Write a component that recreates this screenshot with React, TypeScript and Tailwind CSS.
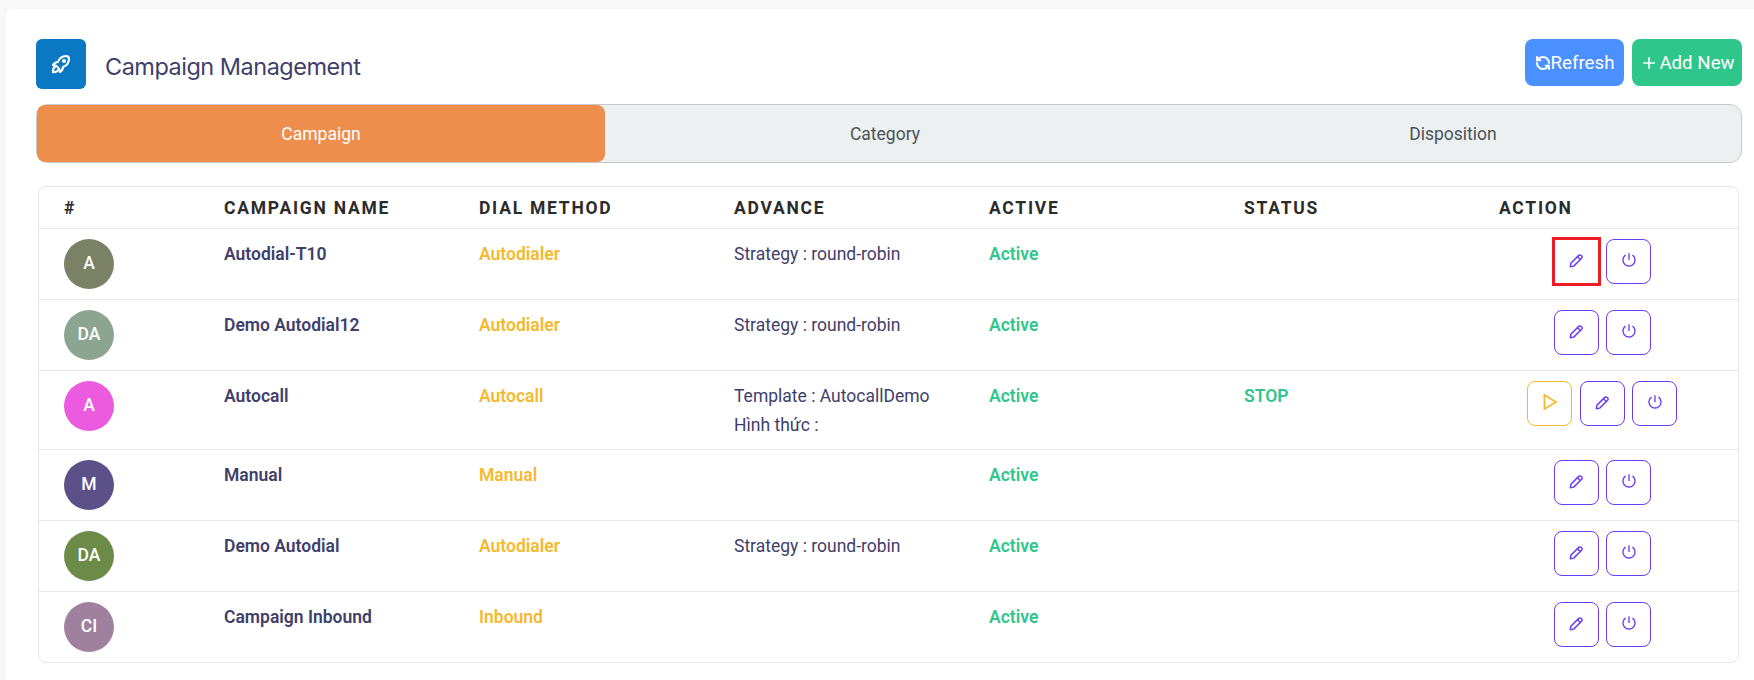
import React from 'react';
import { RefreshCcw } from 'lucide-react';
import { RiAddLine, RiShutDownLine } from 'react-icons/ri';
import { TbRocket } from 'react-icons/tb';

const ROWS = [
  { initials: 'A', color: 'bg-[#7a8164]', name: 'Autodial-T10', method: 'Autodialer', advance: ['Strategy : round-robin'], status: '', play: false, marked: true },
  { initials: 'DA', color: 'bg-[#8ca593]', name: 'Demo Autodial12', method: 'Autodialer', advance: ['Strategy : round-robin'], status: '', play: false, marked: false },
  { initials: 'A', color: 'bg-[#ec5bdf]', name: 'Autocall', method: 'Autocall', advance: ['Template : AutocallDemo', 'Hình thức :'], status: 'STOP', play: true, marked: false },
  { initials: 'M', color: 'bg-[#5c5088]', name: 'Manual', method: 'Manual', advance: [], status: '', play: false, marked: false },
  { initials: 'DA', color: 'bg-[#6c8b49]', name: 'Demo Autodial', method: 'Autodialer', advance: ['Strategy : round-robin'], status: '', play: false, marked: false },
  { initials: 'CI', color: 'bg-[#a0809f]', name: 'Campaign Inbound', method: 'Inbound', advance: [], status: '', play: false, marked: false },
];

const HEADERS = ['#', 'Campaign Name', 'Dial Method', 'Advance', 'Active', 'Status', 'Action'];

const iconBtn = 'w-[45px] h-[45px] rounded-lg border flex items-center justify-center bg-white';

// capsule pencil, the icon sets don't have this one
const PencilIcon = () => (
  <svg viewBox="0 0 16 16" className="w-[17px] h-[17px] -mt-0.5 text-[#6a3cf5]" fill="none" stroke="currentColor" strokeWidth="1.4" strokeLinejoin="round" strokeLinecap="round">
    <path d="M2.2 13.8l.5-3.2 7.4-7.4a1.6 1.6 0 0 1 2.3 0l.4.4a1.6 1.6 0 0 1 0 2.3l-7.4 7.4z" />
    <path d="M9 4.4l2.6 2.6" />
  </svg>
);

const PlayIcon = () => (
  <svg viewBox="0 0 16 18" className="w-4 h-[18px] -mt-0.5 text-[#f3ba2f]" fill="none" stroke="currentColor" strokeWidth="1.8" strokeLinejoin="miter">
    <path d="M2.5 2v14l11.5-7z" />
  </svg>
);

const App: React.FC = () => {
  return (
    <div className="h-[680px] overflow-hidden bg-[#f8f8f8] pl-1.5 pt-[9px] font-['Roboto',sans-serif]">
      <div className="h-[671px] bg-white rounded-tl-lg pl-[30px] pr-3 pt-[30px]">

        {/* Header */}
        <div className="flex justify-between items-start h-[50px]">
          <div className="flex items-center">
            <div className="w-[50px] h-[50px] rounded-md bg-[#0a78c2] flex items-center justify-center">
              <TbRocket className="w-6 h-6 text-white" strokeWidth={2.2} />
            </div>
            <h1 className="ml-[19px] mt-[6px] text-[23.5px] font-['Inter',sans-serif] text-[#3f4069] tracking-[-0.5px]">Campaign Management</h1>
          </div>
          <div className="flex gap-2">
            <button className="h-[47px] w-[99px] pt-px rounded-lg bg-[#4a90fe] text-white text-[18.7px] flex items-center justify-center">
              <RefreshCcw className="w-4 h-4" strokeWidth={3} />Refresh
            </button>
            <button className="h-[47px] w-[110px] pt-px rounded-lg bg-[#2fc68c] text-white text-[18.7px] flex items-center justify-center">
              <RiAddLine className="w-5 h-5" />Add New
            </button>
          </div>
        </div>

        {/* Tabs */}
        <div className="mt-[15px] h-[59px] flex rounded-xl border border-[#c8c8c8] bg-[#edf0f1] text-[17.5px] text-[#4b5258]">
          <div className="w-[568px] pt-px rounded-lg bg-[#ee8e4d] text-white flex items-center justify-center">Campaign</div>
          <div className="w-[560px] pt-px flex items-center justify-center">Category</div>
          <div className="flex-1 pt-px flex items-center justify-center">Disposition</div>
        </div>

        {/* Table */}
        <div className="mt-[23px] ml-0.5 mr-[3px] rounded-lg border border-[#e6e6e6] overflow-hidden">
          <table className="w-full table-fixed border-collapse text-[17.5px]">
            <colgroup>
              <col className="w-[161px]" />
              <col className="w-[255px]" />
              <col className="w-[255px]" />
              <col className="w-[255px]" />
              <col className="w-[255px]" />
              <col className="w-[255px]" />
              <col />
            </colgroup>
            <thead>
              <tr className="border-b border-[#e6e6e6]">
                {HEADERS.map(h => (
                  <th key={h} className="h-[41px] px-6 pt-px first:pl-[25px] text-left text-[17.5px] font-bold uppercase tracking-[1.75px] text-[#2b2b2b]">{h}</th>
                ))}
              </tr>
            </thead>
            <tbody>
              {ROWS.map((r, i) => (
                <tr key={i} className="border-b border-[#e6e6e6] last:border-b-0 align-top">
                  <td className="pl-[25px] pr-6 py-2.5">
                    <div className={`w-[50px] h-[50px] rounded-full ${r.color} text-white font-medium flex items-center justify-center`}>{r.initials}</div>
                  </td>
                  <td className="px-6 pt-[13px] pb-3 leading-6 font-semibold text-[#3f4069]">{r.name}</td>
                  <td className="px-6 pt-[13px] pb-3 leading-6 font-semibold text-[#f5b82e]">{r.method}</td>
                  <td className="px-6 pt-[13px] pb-3 leading-6 text-[#3f4069]">
                    {r.advance.map(line => <p key={line} className="mb-[5px] last:mb-0">{line}</p>)}
                  </td>
                  <td className="px-6 pt-[13px] pb-3 leading-6 font-semibold text-[#2fc68c]">Active</td>
                  <td className="px-6 pt-[13px] pb-3 leading-6 font-semibold text-[#2fc68c]">{r.status}</td>
                  <td className={`py-2.5 pl-[24px] ${r.play ? 'pr-[33px]' : 'pr-[32px]'}`}>
                    <div className="flex justify-center gap-[7px]">
                      {r.play && (
                        <button className={`${iconBtn} mr-px border-[#f3ba2f]`}>
                          <PlayIcon />
                        </button>
                      )}
                      <button className={`${iconBtn} border-[#6a3cf5] ${r.marked ? 'rounded-none outline-[3px] outline-[#ee1c25] -outline-offset-[1px]' : ''}`}>
                        <PencilIcon />
                      </button>
                      <button className={`${iconBtn} border-[#6a3cf5]`}>
                        <RiShutDownLine className="w-4 h-4 -mt-0.5 text-[#6a3cf5]" />
                      </button>
                    </div>
                  </td>
                </tr>
              ))}
            </tbody>
          </table>
        </div>
      </div>
    </div>
  );
};

export default App;
